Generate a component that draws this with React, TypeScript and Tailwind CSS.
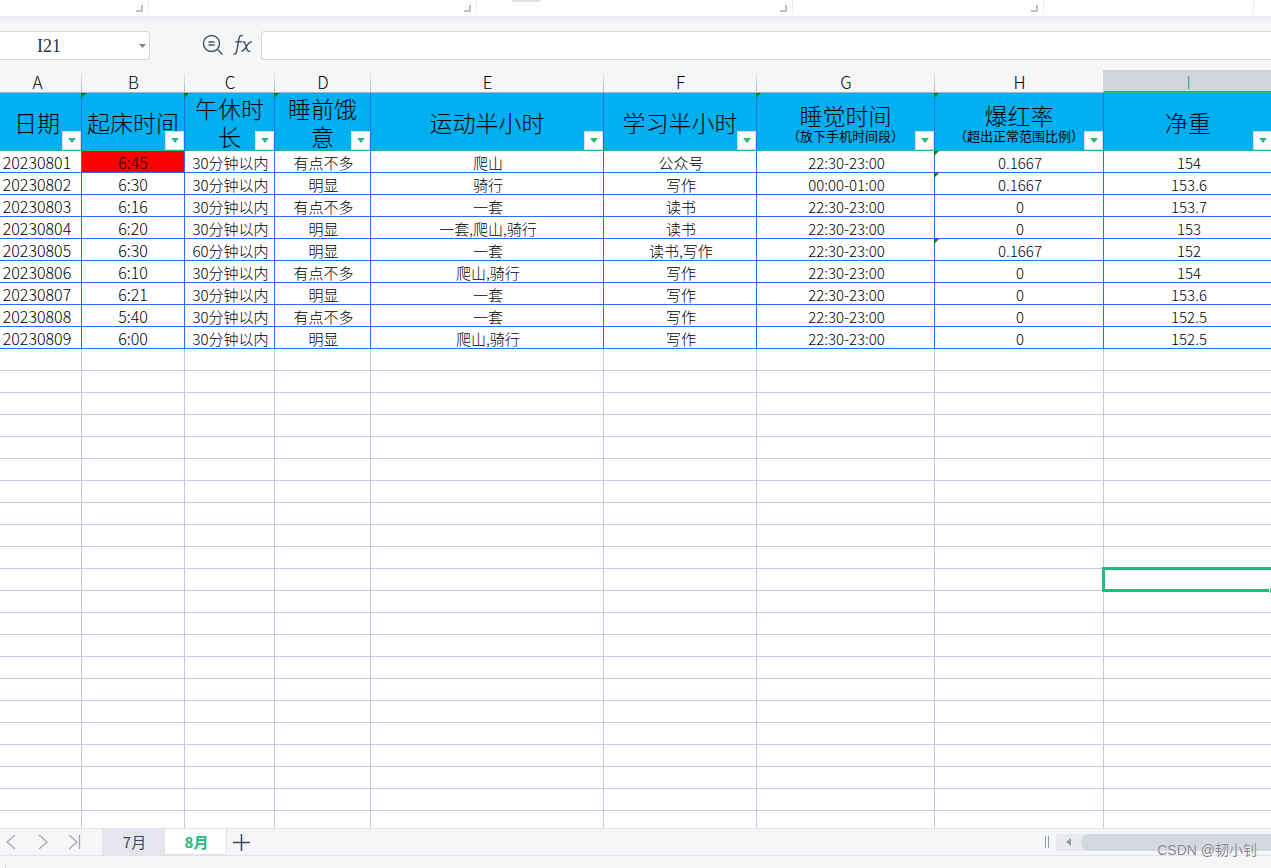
import type { ReactNode } from 'react';
import clsx from 'clsx';

type Column = {
  letter: string;
  title: string;
  note?: string;
  width: string;
  flag?: boolean;
};

const columns: Column[] = [
  { letter: 'A', title: '日期', width: 'w-[89px]' },
  { letter: 'B', title: '起床时间', width: 'w-[103px]', flag: true },
  { letter: 'C', title: '午休时长', width: 'w-[90px]', flag: true },
  { letter: 'D', title: '睡前饿意', width: 'w-24', flag: true },
  { letter: 'E', title: '运动半小时', width: 'w-[233px]' },
  { letter: 'F', title: '学习半小时', width: 'w-[153px]' },
  { letter: 'G', title: '睡觉时间', note: '（放下手机时间段）', width: 'w-[178px]', flag: true },
  { letter: 'H', title: '爆红率', note: '（超出正常范围比例）', width: 'w-[169px]', flag: true },
  { letter: 'I', title: '净重', width: 'w-auto' },
];

const rows = [
  ['20230801', '6:45', '30分钟以内', '有点不多', '爬山', '公众号', '22:30-23:00', '0.1667', '154'],
  ['20230802', '6:30', '30分钟以内', '明显', '骑行', '写作', '00:00-01:00', '0.1667', '153.6'],
  ['20230803', '6:16', '30分钟以内', '有点不多', '一套', '读书', '22:30-23:00', '0', '153.7'],
  ['20230804', '6:20', '30分钟以内', '明显', '一套,爬山,骑行', '读书', '22:30-23:00', '0', '153'],
  ['20230805', '6:30', '60分钟以内', '明显', '一套', '读书,写作', '22:30-23:00', '0.1667', '152'],
  ['20230806', '6:10', '30分钟以内', '有点不多', '爬山,骑行', '写作', '22:30-23:00', '0', '154'],
  ['20230807', '6:21', '30分钟以内', '明显', '一套', '写作', '22:30-23:00', '0', '153.6'],
  ['20230808', '5:40', '30分钟以内', '有点不多', '一套', '写作', '22:30-23:00', '0', '152.5'],
  ['20230809', '6:00', '30分钟以内', '明显', '爬山,骑行', '写作', '22:30-23:00', '0', '152.5'],
];

const FIRST_EMPTY_ROW = 11;
const SELECTED_ROW = 21;
const emptyRows = Array.from({ length: 60 }, (_, i) => FIRST_EMPTY_ROW + i);

function Flag() {
  return (
    <svg className="absolute top-0 -left-px" width="5" height="5" viewBox="0 0 5 5">
      <path d="M0 0h5L0 5z" fill="#008000" />
    </svg>
  );
}

function RibbonGroup({ className, children }: { className: string; children?: ReactNode }) {
  return (
    <div className={clsx('relative flex h-3.5 shrink-0 justify-end border-r border-[#eceef1] pt-[5px] pr-[5px]', className)}>
      {children}
    </div>
  );
}

function Corner() {
  return <span className="h-[7px] w-[7px] border-r-2 border-b-2 border-[#b9c0ce]" />;
}

function Ribbon() {
  return (
    <div className="flex h-4 overflow-hidden bg-white">
      <RibbonGroup className="w-[149px]">
        <Corner />
      </RibbonGroup>
      <RibbonGroup className="w-[328px]">
        <Corner />
      </RibbonGroup>
      <RibbonGroup className="w-[316px]">
        <span className="absolute top-0 left-[35px] h-0.5 w-7 rounded-b bg-[#dcdfe4]" />
        <Corner />
      </RibbonGroup>
      <RibbonGroup className="w-[251px]">
        <Corner />
      </RibbonGroup>
      <RibbonGroup className="w-[210px]" />
    </div>
  );
}

function FormulaBar() {
  return (
    <div className="flex bg-linear-to-b from-[#e6e8ec] from-0% to-[#f5f6f8] to-10% pt-[15px] pb-2.5">
      <div className="flex h-[29px] w-[150px] shrink-0 items-center rounded-r-sm border border-l-0 border-[#d5d7dc] bg-white">
        <input
          aria-label="名称框"
          defaultValue="I21"
          className="w-[98px] bg-transparent text-center font-['Liberation_Serif','Noto_Sans_CJK_SC',serif] text-lg leading-6 text-[#2c3345] outline-none"
        />
        <button aria-label="名称列表" className="ml-auto flex h-full w-3.5 items-center justify-center">
          <svg width="7" height="4" viewBox="0 0 7 4">
            <path d="M0 0h7L3.500 4z" fill="#7483a0" />
          </svg>
        </button>
      </div>
      <button aria-label="查找" className="ml-[51px] flex h-[27px] w-6 shrink-0 items-center justify-center">
        <svg width="22" height="22" viewBox="0 0 22 22" fill="none" stroke="#4c566b" strokeWidth="1.500">
          <circle cx="9.500" cy="9.500" r="8" />
          <path d="M15.300 15.300l5.200 5.200M6.500 8h6M6.500 11h6" />
        </svg>
      </button>
      <button aria-label="插入函数" className="ml-1.5 flex h-[27px] w-6 shrink-0 items-center justify-center">
        <svg width="20" height="22" viewBox="0 0 20 22" fill="none" stroke="#4c566b" strokeWidth="1.500">
          <path d="M9.800 1.800C7.800 .9 6.500 1.800 6 4.300L3.700 17.200c-.4 2.300-1.500 3.200-3.200 2.700M2.500 7.800h6.300" />
          <path d="M9.500 8.200c1.600-.8 2.300.1 2.800 1.700l1.700 5.600c.5 1.700 1.500 2.300 3.300 1.300M18.800 8.200c-2-.6-3 .7-4.300 2.600l-2.800 4.200c-1 1.500-2 2.500-3.500 1.900" />
        </svg>
      </button>
      <input
        aria-label="编辑栏"
        className="ml-1.5 h-[29px] min-w-0 flex-1 rounded-l-sm border border-r-0 border-[#d5d7dc] bg-white px-2 outline-none"
      />
    </div>
  );
}

function FilterButton({ label }: { label: string }) {
  return (
    <button
      aria-label={`筛选 ${label}`}
      className="absolute right-0 bottom-0 flex h-[19px] w-[19px] items-center justify-center border border-[#d9dce6] bg-white"
    >
      <svg width="8" height="5" viewBox="0 0 8 5">
        <path d="M0 0h8L4 5z" fill="#21ba7d" />
      </svg>
    </button>
  );
}

function Sheet() {
  return (
    <div className="min-h-0 flex-1 overflow-hidden bg-white">
      {/* column A starts a little left of the viewport, column I ends a little right of it */}
      <table className="-ml-[7px] w-[calc(100%+9px)] table-fixed border-separate border-spacing-0 text-center font-light text-black">
        <colgroup>
          {columns.map((col) => (
            <col key={col.letter} className={col.width} />
          ))}
        </colgroup>
        <thead>
          <tr className="bg-[#f5f6f8]">
            {columns.map((col) => (
              <th
                key={col.letter}
                className={clsx(
                  'relative h-[23px] border-b p-0 pt-0.5 text-[17px] leading-5 font-light',
                  col.letter === 'I'
                    ? 'border-b-[#21ba7d] bg-[#d1d4dc] text-[#21a67a] shadow-[inset_0_-1px_0_#21ba7d]'
                    : 'border-b-[#a9b2c6]',
                )}
              >
                {col.letter}
                {col.letter !== 'I' && (
                  <span
                    className={clsx(
                      'absolute top-0 right-0 h-full w-px',
                      col.letter === 'H' ? 'bg-[#d1d4dc]' : 'bg-linear-to-b from-[#f5f6f8] to-[#a9b2c6]',
                    )}
                  />
                )}
              </th>
            ))}
          </tr>
          <tr className="bg-[#00b0f0]">
            {columns.map((col) => (
              <th
                key={col.letter}
                className="relative h-[58px] border-r border-b border-r-[#2470f5] border-b-[#21ba7d] p-0 text-[23px] leading-7 font-light"
              >
                {col.flag && <Flag />}
                {col.note ? (
                  <div className="pt-1">
                    <div className="leading-6">{col.title}</div>
                    <div className="text-[13px] leading-[18px] font-normal whitespace-nowrap">{col.note}</div>
                  </div>
                ) : (
                  <div className={clsx((col.letter === 'C' || col.letter === 'D') && 'px-2')}>{col.title}</div>
                )}
                <FilterButton label={col.title} />
              </th>
            ))}
          </tr>
        </thead>
        <tbody>
          {rows.map((row) => (
            <tr key={row[0]}>
              {row.map((value, i) => (
                <td
                  key={columns[i].letter}
                  className={clsx(
                    'relative h-[22px] border-r border-b border-r-[#2470f5] border-b-[#2470f5] p-0 pt-0.5 whitespace-nowrap',
                    i < 2 ? 'text-base leading-[19px]' : 'pl-0.5 text-[15px] leading-[19px]',
                    value === '6:45' && 'bg-[#ff0000]',
                  )}
                >
                  {value === '0.1667' && <Flag />}
                  {value}
                </td>
              ))}
            </tr>
          ))}
          {emptyRows.map((n) => (
            <tr key={n}>
              {columns.map((col) => (
                <td key={col.letter} className="relative h-[22px] border-r border-b border-[#c3c9dc] p-0">
                  {n === SELECTED_ROW && col.letter === 'I' && (
                    <>
                      <span className="absolute -inset-0.5 z-10 border-3 border-[#21ba7d]" />
                      <span className="absolute -right-1 -bottom-1 z-10 h-[7px] w-[7px] border border-white bg-[#21ba7d]" />
                    </>
                  )}
                </td>
              ))}
            </tr>
          ))}
        </tbody>
      </table>
    </div>
  );
}

function SheetTabs() {
  return (
    <div className="flex h-7 shrink-0 border-y border-[#e1e3ea]">
      <div className="flex w-[102px] shrink-0 items-center text-[#a9abb0]">
        <button aria-label="上一个工作表" className="w-8 pl-1.5">
          <svg width="10" height="16" viewBox="0 0 10 16" fill="none" stroke="currentColor" strokeWidth="1.300">
            <path d="M9 1L1 8l8 7" />
          </svg>
        </button>
        <button aria-label="下一个工作表" className="w-8 pl-1.5">
          <svg width="10" height="16" viewBox="0 0 10 16" fill="none" stroke="currentColor" strokeWidth="1.300">
            <path d="M1 1l8 7-8 7" />
          </svg>
        </button>
        <button aria-label="最后一个工作表" className="w-8 pl-1">
          <svg width="13" height="16" viewBox="0 0 13 16" fill="none" stroke="currentColor" strokeWidth="1.300">
            <path d="M1 1l8 7-8 7M11.500 1v14" />
          </svg>
        </button>
      </div>
      <button className="w-[63px] shrink-0 bg-[#e5e6ed] pl-0.5 text-[15px] leading-6 text-[#3d465c]">7月</button>
      <button className="w-[62px] shrink-0 border-r border-b border-[#e1e3ea] bg-white pl-0.5 text-[15px] leading-6 font-bold text-[#21ba7d]">
        8月
      </button>
      <button aria-label="新建工作表" className="flex w-7 shrink-0 items-center justify-center">
        <svg width="17" height="17" viewBox="0 0 17 17" stroke="#3d465c" strokeWidth="1.500">
          <path d="M8.500 0v17M0 8.500h17" />
        </svg>
      </button>
      <div className="ml-auto flex items-center">
        <span className="h-3 w-1 border-x border-[#8c9ab4]" />
        <div className="ml-[7px] flex h-[17px] w-[215px] items-center bg-[#e9eaef]">
          <button aria-label="向左滚动" className="flex w-[25px] justify-center">
            <svg width="5" height="8" viewBox="0 0 5 8">
              <path d="M5 0v8L0 4z" fill="#8c9ab4" />
            </svg>
          </button>
          <span className="h-full flex-1 rounded-l-full bg-[#d4d7df]" />
        </div>
      </div>
    </div>
  );
}

export default function App() {
  return (
    <main className="relative flex h-screen flex-col overflow-hidden bg-[#f5f6f8] font-['Noto_Sans_CJK_SC',sans-serif]">
      <Ribbon />
      <FormulaBar />
      <Sheet />
      <SheetTabs />
      {/* status bar */}
      <div className="flex h-3 shrink-0 items-end pl-[5px]">
        <span className="h-[5px] w-px bg-[#d5d7dc]" />
      </div>
      <p className="absolute right-3.5 bottom-2 z-20 font-['Liberation_Sans','Noto_Sans_CJK_SC',sans-serif] text-sm leading-5 text-[#85878c] [text-shadow:0_0_1px_white]">
        CSDN @韧小钊
      </p>
    </main>
  );
}
